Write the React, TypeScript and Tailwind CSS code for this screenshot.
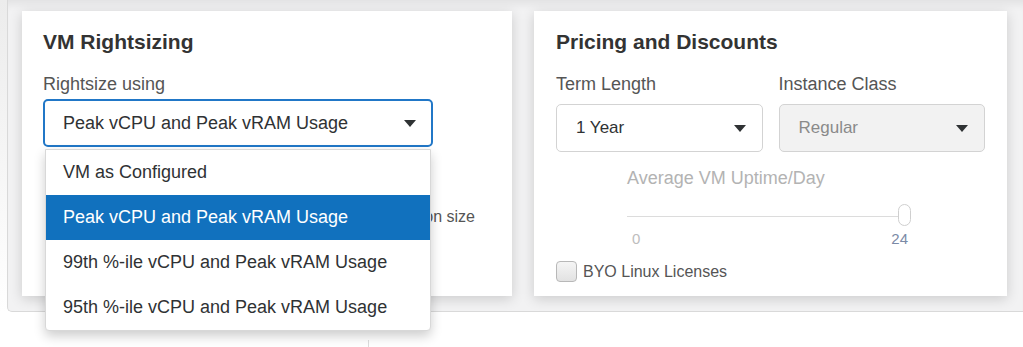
import { useState } from "react";

const rightsizeOptions = [
  "VM as Configured",
  "Peak vCPU and Peak vRAM Usage",
  "99th %-ile vCPU and Peak vRAM Usage",
  "95th %-ile vCPU and Peak vRAM Usage",
];

function Caret() {
  return (
    <svg width="12" height="7" viewBox="0 0 12 7" className="shrink-0">
      <path d="M0 0 L12 0 L6 7 Z" fill="#2f3234" />
    </svg>
  );
}

function RightsizingCard() {
  const [selected, setSelected] = useState(1);

  return (
    <div className="relative w-[490px] h-[285px] shrink-0 bg-white px-[21px] pt-[18px] shadow-[0_3px_12px_rgba(0,0,0,0.16)]">
      <h2 className="text-[21px] leading-[25px] font-bold text-[#333]">VM Rightsizing</h2>
      <div className="mt-[18px] text-[18px] leading-6 text-[#555]">Rightsize using</div>

      <div className="relative mt-[3px] w-[390px]">
        <div className="flex h-[48px] items-center justify-between rounded-[5px] border-2 border-[#2177c7] pl-[18px] pr-[15px] text-[18px] text-[#2f3234]">
          <span>{rightsizeOptions[selected]}</span>
          <Caret />
        </div>

        {/* open menu */}
        <ul className="absolute left-[2px] top-[50px] z-10 w-[386px] rounded-b-[4px] border border-[#d8d8d8] bg-white shadow-[0_5px_12px_rgba(0,0,0,0.2)]">
          {rightsizeOptions.map((opt, i) => (
            <li
              key={opt}
              onClick={() => setSelected(i)}
              className={
                i === selected
                  ? "flex h-[45px] items-center bg-[#1171be] pl-[17px] text-[18px] text-white"
                  : "flex h-[45px] items-center pl-[17px] text-[18px] text-[#2f3234]"
              }
            >
              {opt}
            </li>
          ))}
        </ul>
      </div>

      {/* mostly hidden behind the open menu */}
      <div className="mt-[60px] w-[432px] text-right text-[16px] leading-5 text-[#555]">
        ion size
      </div>
    </div>
  );
}

function PricingCard() {
  return (
    <div className="w-[473px] h-[285px] shrink-0 bg-white px-[22px] pt-[18px] shadow-[0_3px_12px_rgba(0,0,0,0.16)]">
      <h2 className="text-[21px] leading-[25px] font-bold text-[#333]">Pricing and Discounts</h2>

      <div className="mt-[18px] grid grid-cols-2 gap-x-4">
        <div>
          <div className="text-[18px] leading-6 text-[#555]">Term Length</div>
          <div className="mt-[8px] flex h-[48px] items-center justify-between rounded-[5px] border-[1.5px] border-[#d3d3d3] bg-white pl-[19px] pr-[16px] text-[17px] text-[#2f3234]">
            <span>1 Year</span>
            <Caret />
          </div>
        </div>
        <div>
          <div className="text-[18px] leading-6 text-[#555]">Instance Class</div>
          <div className="mt-[8px] flex h-[48px] items-center justify-between rounded-[5px] border-[1.5px] border-[#d3d3d3] bg-[#f2f2f2] pl-[19px] pr-[16px] text-[17px] text-[#8a8a8a]">
            <span>Regular</span>
            <Caret />
          </div>
        </div>
      </div>

      {/* uptime slider (disabled) */}
      <div className="ml-[71px] mt-[14px] w-[284px]">
        <div className="text-[18px] leading-6 text-[#b3b3b3]">Average VM Uptime/Day</div>
        <div className="relative mt-[14px] h-[22px]">
          <div className="absolute left-0 right-[13px] top-[12px] h-px bg-[#dcdcdc]" />
          <div className="absolute right-0 top-0 h-[22px] w-[13px] rounded-full border border-[#cfcfcf] bg-white" />
        </div>
        <div className="mt-[4px] flex justify-between pl-[5px] pr-[3px] text-[15px] leading-[18px]">
          <span className="text-[#bdbdbd]">0</span>
          <span className="text-[#7b8aa6]">24</span>
        </div>
      </div>

      <label className="mt-[13px] flex h-[21px] items-center gap-[6px]">
        <span className="h-[21px] w-[21px] rounded-[4px] border border-[#b8b8b8] bg-linear-to-b from-[#f5f5f5] to-[#e2e2e2]" />
        <span className="text-[16px] text-[#555]">BYO Linux Licenses</span>
      </label>
    </div>
  );
}

export default function App() {
  return (
    <div className="h-[347px] w-[1023px] overflow-hidden bg-white font-['Liberation_Sans',Arial,sans-serif]">
      <div className="flex bg-linear-to-b from-[#ececec] to-white">
        <div className="ml-[7px] flex w-[1100px] gap-[22px] rounded-bl-[5px] border-b border-l border-[#d9d9d9] bg-[#f2f2f3] pb-[15px] pl-[14px] pt-[11px] shadow-[inset_0_10px_8px_-6px_rgba(0,0,0,0.07)]">
          <RightsizingCard />
          <PricingCard />
        </div>
      </div>
      <div className="ml-[368px] mt-[28px] h-[7px] w-px bg-[#dddddd]" />
    </div>
  );
}
